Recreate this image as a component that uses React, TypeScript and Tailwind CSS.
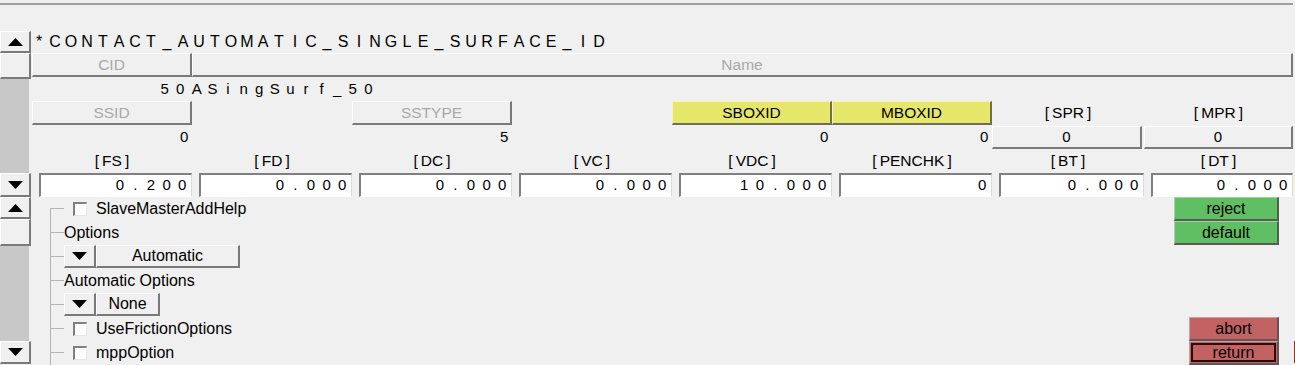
import React from "react";

const raised =
  "border-t border-l border-t-white border-l-white border-r-2 border-b-2 border-r-[#7a7a7a] border-b-[#7a7a7a]";

function Tri({ down }: { down?: boolean }) {
  return (
    <svg width="15" height="8" viewBox="0 0 15 8">
      <polygon points={down ? "0,0 15,0 7.5,8" : "0,8 15,8 7.5,0"} fill="#000" />
    </svg>
  );
}

function Sp({ t }: { t: string }) {
  return (
    <span className="inline-flex">
      {[...t].map((c, i) => (
        <span key={i} className="w-[15.6px] text-center">
          {c}
        </span>
      ))}
    </span>
  );
}

function SpH({ t }: { t: string }) {
  return (
    <span className="inline-flex">
      {[...t].map((c, i) => (
        <span key={i} className="w-[16px] text-center">
          {c}
        </span>
      ))}
    </span>
  );
}

function ScrollBtn({ down, h }: { down?: boolean; h: string }) {
  return (
    <div className={`w-[31px] ${h} ${raised} bg-[#f0f0f0] flex items-center justify-center`}>
      <Tri down={down} />
    </div>
  );
}

function DisBtn({ label, cls = "" }: { label: string; cls?: string }) {
  return (
    <div
      className={`h-[24px] ${raised} bg-[#f0f0f0] flex items-center justify-center text-[#a8a8a8] text-[15.5px] ${cls}`}
    >
      {label}
    </div>
  );
}

function YelBtn({ label }: { label: string }) {
  return (
    <div className="h-[24px] border-t border-l border-t-[#f6f6b0] border-l-[#f6f6b0] border-r-2 border-b-2 border-r-[#6e6e5a] border-b-[#6e6e5a] bg-[#e6e66a] flex items-center justify-center text-black text-[15.5px]">
      {label}
    </div>
  );
}

function Field({ v }: { v: string }) {
  return (
    <div className="h-[24px] pl-[7px]">
      <div className="h-full bg-white border-t-2 border-l-2 border-t-[#808080] border-l-[#808080] border-r border-b border-r-[#dcdcdc] border-b-white flex items-center justify-end pr-[1px] text-[15px] text-black">
        <Sp t={v} />
      </div>
    </div>
  );
}

function Label({ t }: { t: string }) {
  return (
    <div className="h-[24px] flex items-center justify-center text-[15.5px] text-black">
      {"[\u2009" + t + "\u2009]"}
    </div>
  );
}

function Connector({ first }: { first?: boolean }) {
  return (
    <div className="w-[14px] h-full flex flex-col shrink-0">
      <div className={`h-1/2 border-b border-b-[#b4b4b4] ${first ? "" : "border-l border-l-[#b4b4b4]"}`} />
      <div className="flex-1 border-l border-l-[#b4b4b4]" />
    </div>
  );
}

function Check() {
  return (
    <div className="ml-[9px] w-[14px] h-[14px] bg-white border-t-2 border-l-2 border-t-[#808080] border-l-[#808080] border-r border-b border-r-[#e8e8e8] border-b-[#e8e8e8]" />
  );
}

function TreeRow({ first, children, top }: { first?: boolean; children: React.ReactNode; top?: boolean }) {
  return (
    <div className="h-[24px] flex">
      <Connector first={first} />
      <div className={`flex ${top ? "items-start" : "items-center"} h-full`}>{children}</div>
    </div>
  );
}

function GreenBtn({ label }: { label: string }) {
  return (
    <div className="w-[105px] h-[24px] border-t border-l border-t-[#9ad89a] border-l-[#9ad89a] border-r-2 border-b-2 border-r-[#5a5a5a] border-b-[#5a5a5a] bg-[#5fbf62] flex items-center justify-center text-[16px] text-black">
      {label}
    </div>
  );
}

export default function App() {
  const cols = "grid grid-cols-[160px_160px_160px_160px_160px_160px_152px_149px]";
  return (
    <div className="w-[1295px] h-[365px] bg-[#f0f0f0] overflow-hidden font-['Liberation_Sans',Arial,sans-serif] text-black">
      <div className="h-[31px] pt-[3px]">
        <div className="h-[2px] w-[1293px] bg-[#a0a0a0]" />
      </div>

      {/* upper panel */}
      <div className="flex h-[166px]">
        <div className="w-[32px] flex flex-col">
          <ScrollBtn h="h-[22px]" />
          <div className={`w-[31px] h-[26px] ${raised} bg-[#f0f0f0]`} />
          <div className="w-[29px] flex-1 bg-[#c8c8c8]" />
          <ScrollBtn h="h-[24px]" down />
        </div>
        <div className="w-[1261px] flex flex-col">
          <div className="h-[22px] flex items-center text-[16px] leading-none -ml-[1px]">
            <SpH t="*CONTACT_AUTOMATIC_SINGLE_SURFACE_ID" />
          </div>
          <div className={cols}>
            <DisBtn label="CID" />
            <DisBtn label="Name" cls="col-span-7" />
          </div>
          <div className={`${cols} h-[24px] text-[15px]`}>
            <div className="flex items-center justify-end pr-[4px]">
              <Sp t="50" />
            </div>
            <div className="col-span-7 flex items-center -ml-[3px]">
              <Sp t="ASingSurf_50" />
            </div>
          </div>
          <div className={cols}>
            <DisBtn label="SSID" />
            <div />
            <DisBtn label="SSTYPE" />
            <div />
            <YelBtn label="SBOXID" />
            <YelBtn label="MBOXID" />
            <Label t="SPR" />
            <Label t="MPR" />
          </div>
          <div className={`${cols} h-[24px] text-[15px]`}>
            <div className="flex items-center justify-end">
              <Sp t="0" />
            </div>
            <div />
            <div className="flex items-center justify-end">
              <Sp t="5" />
            </div>
            <div />
            <div className="flex items-center justify-end">
              <Sp t="0" />
            </div>
            <div className="flex items-center justify-end">
              <Sp t="0" />
            </div>
            <div className="pt-[1px] pr-[2px]">
              <div className={`h-[23px] ${raised} bg-[#f0f0f0] flex items-center justify-center`}>0</div>
            </div>
            <div className="pt-[1px]">
              <div className={`h-[23px] ${raised} bg-[#f0f0f0] flex items-center justify-center`}>0</div>
            </div>
          </div>
          <div className={cols}>
            <Label t="FS" />
            <Label t="FD" />
            <Label t="DC" />
            <Label t="VC" />
            <Label t="VDC" />
            <Label t="PENCHK" />
            <Label t="BT" />
            <Label t="DT" />
          </div>
          <div className={cols}>
            <Field v="0.200" />
            <Field v="0.000" />
            <Field v="0.000" />
            <Field v="0.000" />
            <Field v="10.000" />
            <Field v="0" />
            <Field v="0.000" />
            <Field v="0.000" />
          </div>
        </div>
      </div>

      {/* lower panel */}
      <div className="flex h-[168px] overflow-hidden">
        <div className="w-[32px] flex flex-col shrink-0">
          <ScrollBtn h="h-[22px]" />
          <div className={`w-[31px] h-[27px] ${raised} bg-[#f0f0f0]`} />
          <div className="w-[29px] h-[95px] bg-[#c8c8c8]" />
          <ScrollBtn h="h-[23px]" down />
        </div>
        <div className="flex-1 flex justify-between">
          <div className="pl-[18px] flex flex-col text-[16px]">
            <TreeRow first>
              <Check />
              <span className="ml-[9px]">SlaveMasterAddHelp</span>
            </TreeRow>
            <TreeRow>
              <span>Options</span>
            </TreeRow>
            <TreeRow top>
              <div className={`w-[32px] h-[23px] ${raised} bg-[#f0f0f0] flex items-center justify-center`}>
                <Tri down />
              </div>
              <div className={`w-[144px] h-[23px] ${raised} bg-[#f0f0f0] flex items-center justify-center`}>
                Automatic
              </div>
            </TreeRow>
            <TreeRow>
              <span>Automatic Options</span>
            </TreeRow>
            <TreeRow top>
              <div className={`w-[32px] h-[23px] ${raised} bg-[#f0f0f0] flex items-center justify-center`}>
                <Tri down />
              </div>
              <div className={`w-[64px] h-[23px] ${raised} bg-[#f0f0f0] flex items-center justify-center`}>
                None
              </div>
            </TreeRow>
            <TreeRow>
              <Check />
              <span className="ml-[9px]">UseFrictionOptions</span>
            </TreeRow>
            <TreeRow>
              <Check />
              <span className="ml-[9px]">mppOption</span>
            </TreeRow>
          </div>
          <div className="flex flex-col items-end pr-[16px] text-[16px] shrink-0">
            <GreenBtn label="reject" />
            <GreenBtn label="default" />
            <div className="h-[72px]" />
            <div className="w-[90px] h-[24px] border-t border-l border-t-[#d89a9a] border-l-[#d89a9a] border-r-2 border-b-2 border-r-[#5a5a5a] border-b-[#5a5a5a] bg-[#c26262] flex items-center justify-center">
              abort
            </div>
            <div className="flex">
              <div className="w-[90px] h-[24px] border-t border-l border-t-[#d89a9a] border-l-[#d89a9a] border-r-2 border-b-2 border-r-[#5a5a5a] border-b-[#5a5a5a] bg-[#c26262] p-[1px]">
                <div className="w-full h-full border-2 border-[#2a0a0a] flex items-center justify-center">return</div>
              </div>
              <div className="w-0 overflow-visible">
                <div className="ml-[15px] w-[40px] h-[22px] border-l-2 border-l-[#8a3030] bg-[#c26262]" />
              </div>
            </div>
          </div>
        </div>
      </div>
    </div>
  );
}
